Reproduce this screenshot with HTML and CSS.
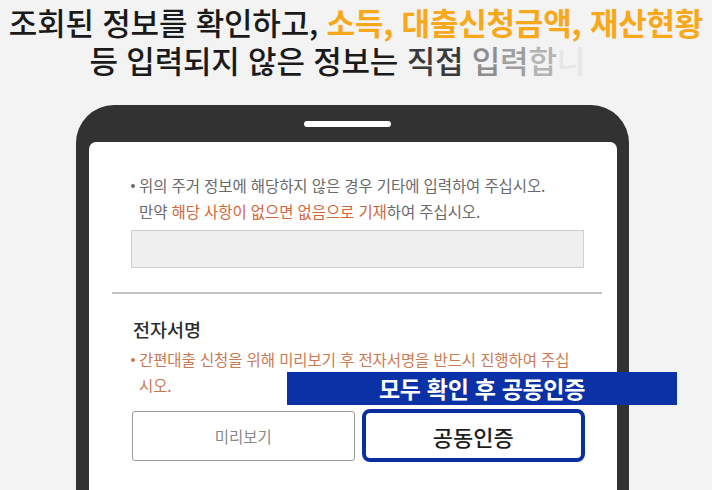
FILE: index.html
```html
<!DOCTYPE html>
<html lang="ko">
<head>
<meta charset="utf-8">
<link rel="stylesheet" href="styles.css">
</head>
<body>
<div class="stage">
  <header class="caption">
    <p class="cap-line cap-1">조회된 정보를 확인하고, <span class="hl">소득, 대출신청금액, 재산현황</span></p>
    <p class="cap-line cap-2">등 입력되지 않은 정보는 <span class="f1">직접</span> <span class="f2">입</span><span class="f3">력</span><span class="f4">합</span><span class="f5">니</span><span class="f6">다.</span></p>
  </header>

  <div class="phone">
    <div class="bezel"><span class="speaker"></span></div>
    <div class="screen">
      <div class="notice">
        <p class="bullet">위의 주거 정보에 해당하지 않은 경우 기타에 입력하여 주십시오.<br>만약 <span class="warn">해당 사항이 없으면 없음으로 기재</span>하여 주십시오.</p>
        <div class="field"></div>
      </div>
      <hr class="divider">
      <div class="sign">
        <h2 class="sign-title">전자서명</h2>
        <p class="bullet orange">간편대출 신청을 위해 미리보기 후 전자서명을 반드시 진행하여 주십<br>시오.</p>
        <div class="actions">
          <button class="btn btn-preview">미리보기</button>
          <button class="btn btn-cert">공동인증</button>
        </div>
      </div>
    </div>
  </div>

  <div class="banner">모두 확인 후 공동인증</div>
</div>
</body>
</html>
```

FILE: styles.css
```css
* { box-sizing: border-box; }
html, body { margin: 0; padding: 0; }
body {
  width: 712px;
  height: 490px;
  overflow: hidden;
  background: #f3f3f3;
  font-family: "Noto Sans CJK KR", "Noto Sans", sans-serif;
}
.stage {
  position: relative;
  width: 712px;
  height: 490px;
  overflow: hidden;
}
.caption {
  height: 105px;
  padding-top: 3px;
  text-align: center;
}
.cap-line {
  margin: 0;
  font-size: 31px;
  font-weight: 500;
  color: #1a1a1a;
  letter-spacing: -0.2px;
  white-space: nowrap;
}
.cap-1 { line-height: 38px; }
.cap-2 { line-height: 37px; }
.hl { color: #f8a81b; font-weight: 700; }
.f1 { color: #3a3a3a; }
.f2 { color: #8d8d8d; }
.f3 { color: #9e9e9e; }
.f4 { color: #b4b4b4; }
.f5 { color: #e6e6e6; }
.f6 { color: #f3f3f3; }

.phone {
  margin: 0 0 0 76px;
  width: 553px;
  height: 400px;
  background: #323232;
  border-radius: 38px 38px 0 0;
  padding: 0 12px 0 13px;
  display: flex;
  flex-direction: column;
}
.bezel {
  height: 37px;
  display: flex;
  justify-content: center;
  align-items: flex-start;
  padding-top: 16px;
}
.speaker {
  display: block;
  width: 87px;
  height: 6px;
  border-radius: 3px;
  background: #ffffff;
  margin-left: -12px;
}
.screen {
  flex: 1;
  background: #ffffff;
  border-radius: 7px 7px 0 0;
  padding-top: 30px;
}
.notice { padding: 0 32px 0 42px; }
.bullet {
  margin: 0;
  font-size: 15.5px;
  line-height: 26px;
  color: #6a6a6a;
  padding-left: 8px;
  position: relative;
  letter-spacing: -0.1px;
}
.bullet::before {
  content: "";
  position: absolute;
  left: 0;
  top: 12px;
  width: 4px;
  height: 4px;
  border-radius: 50%;
  background: currentColor;
}
.warn { color: #d4663a; }
.field {
  margin-top: 6px;
  height: 38px;
  width: 453px;
  background: #efefef;
  border: 1px solid #cfcfcf;
}
.divider {
  margin: 24px 15px 0 23px;
  border: 0;
  height: 2px;
  background: #c2c2c2;
}
.sign { padding: 0 32px 0 43px; }
.sign-title {
  margin: 20px 0 0 1px;
  font-size: 18.5px;
  font-weight: 500;
  line-height: 30px;
  color: #2e2e2e;
}
.bullet.orange {
  margin-top: 2px;
  margin-left: -1px;
  color: #c97a52;
}
.actions {
  display: flex;
  gap: 7px;
  margin-top: 11px;
}
.btn {
  font-family: inherit;
  background: #ffffff;
  cursor: pointer;
}
.btn-preview {
  width: 223px;
  height: 50px;
  margin-top: 2px;
  border: 1px solid #9a9a9a;
  border-radius: 3px;
  color: #8a8a8a;
  font-size: 15.5px;
}
.btn-cert {
  width: 224px;
  height: 53px;
  border: 4px solid #0a2f9f;
  border-radius: 8px;
  color: #1e1e1e;
  font-size: 22px;
  font-weight: 500;
}
.banner {
  position: absolute;
  left: 287px;
  top: 372px;
  width: 390px;
  height: 33px;
  background: #0a31a6;
  color: #ffffff;
  font-size: 23px;
  font-weight: 700;
  line-height: 33px;
  text-align: center;
  letter-spacing: -0.3px;
}
```
